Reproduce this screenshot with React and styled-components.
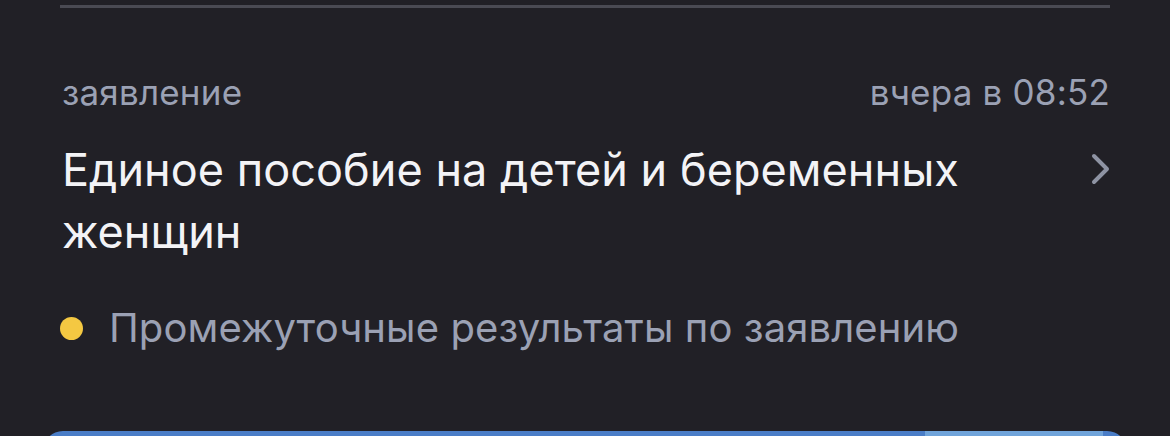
import React from 'react';
import styled, { createGlobalStyle } from 'styled-components';

const GlobalStyle = createGlobalStyle`
  html, body {
    margin: 0;
    padding: 0;
    background: #212026;
    overflow: hidden;
  }
  body {
    font-family: Inter, "Noto Sans", sans-serif;
    -webkit-font-smoothing: antialiased;
  }
`;

const Screen = styled.div`
  width: 1170px;
  height: 436px;
  background: #212026;
  display: flex;
  flex-direction: column;
  overflow: hidden;
`;

const Divider = styled.div`
  margin: 5px 60px 0;
  height: 3px;
  background: #4a4a53;
`;

const Card = styled.div`
  padding: 0 60px 0 62px;
  display: flex;
  flex-direction: column;
`;

const Meta = styled.div`
  display: flex;
  justify-content: space-between;
  align-items: baseline;
  margin-top: 64px;
  font-size: 35px;
  line-height: 40px;
  color: #9ba1b4;
  letter-spacing: 0.2px;
`;

const TitleRow = styled.div`
  display: flex;
  justify-content: space-between;
  align-items: flex-start;
  margin-top: 27px;
`;

const Title = styled.div`
  max-width: 1000px;
  font-size: 45px;
  line-height: 62px;
  color: #f3f3f6;
  letter-spacing: 0.05px;
`;

const Chevron = styled.svg`
  flex: none;
  width: 22px;
  height: 32px;
  margin-top: 14px;
  margin-right: -2px;
`;

const Status = styled.div`
  display: flex;
  align-items: center;
  gap: 26px;
  margin-top: 41px;
  margin-left: -2px;
  font-size: 40px;
  line-height: 48px;
  color: #9ba1b4;
  letter-spacing: 0.1px;
`;

const Dot = styled.span`
  flex: none;
  width: 23px;
  height: 23px;
  border-radius: 50%;
  background: ${(p) => p.color};
`;

const Progress = styled.div`
  margin: auto 43px 0 43px;
  height: 40px;
  flex: none;
  transform: translateY(35px);
  border-radius: 34px;
  background: linear-gradient(
    to right,
    #4a7dc7 0,
    #4a7dc7 ${(p) => p.from}px,
    #70a4da ${(p) => p.from}px,
    #70a4da ${(p) => p.to}px,
    #4a7dc7 ${(p) => p.to}px
  );
`;

export default function App() {
  return (
    <>
      <GlobalStyle />
      <Screen>
        <Divider />
        <Card>
          <Meta>
            <span>заявление</span>
            <span>вчера в 08:52</span>
          </Meta>
          <TitleRow>
            <Title>Единое пособие на детей и беременных женщин</Title>
            <Chevron viewBox="0 0 22 32" fill="none">
              <path
                d="M4 3 L17 16 L4 29"
                stroke="#8e93a3"
                strokeWidth="4"
                strokeLinecap="round"
                strokeLinejoin="round"
              />
            </Chevron>
          </TitleRow>
          <Status>
            <Dot color="#f4c842" />
            <span>Промежуточные результаты по заявлению</span>
          </Status>
        </Card>
        <Progress from={882} to={1060} />
      </Screen>
    </>
  );
}
